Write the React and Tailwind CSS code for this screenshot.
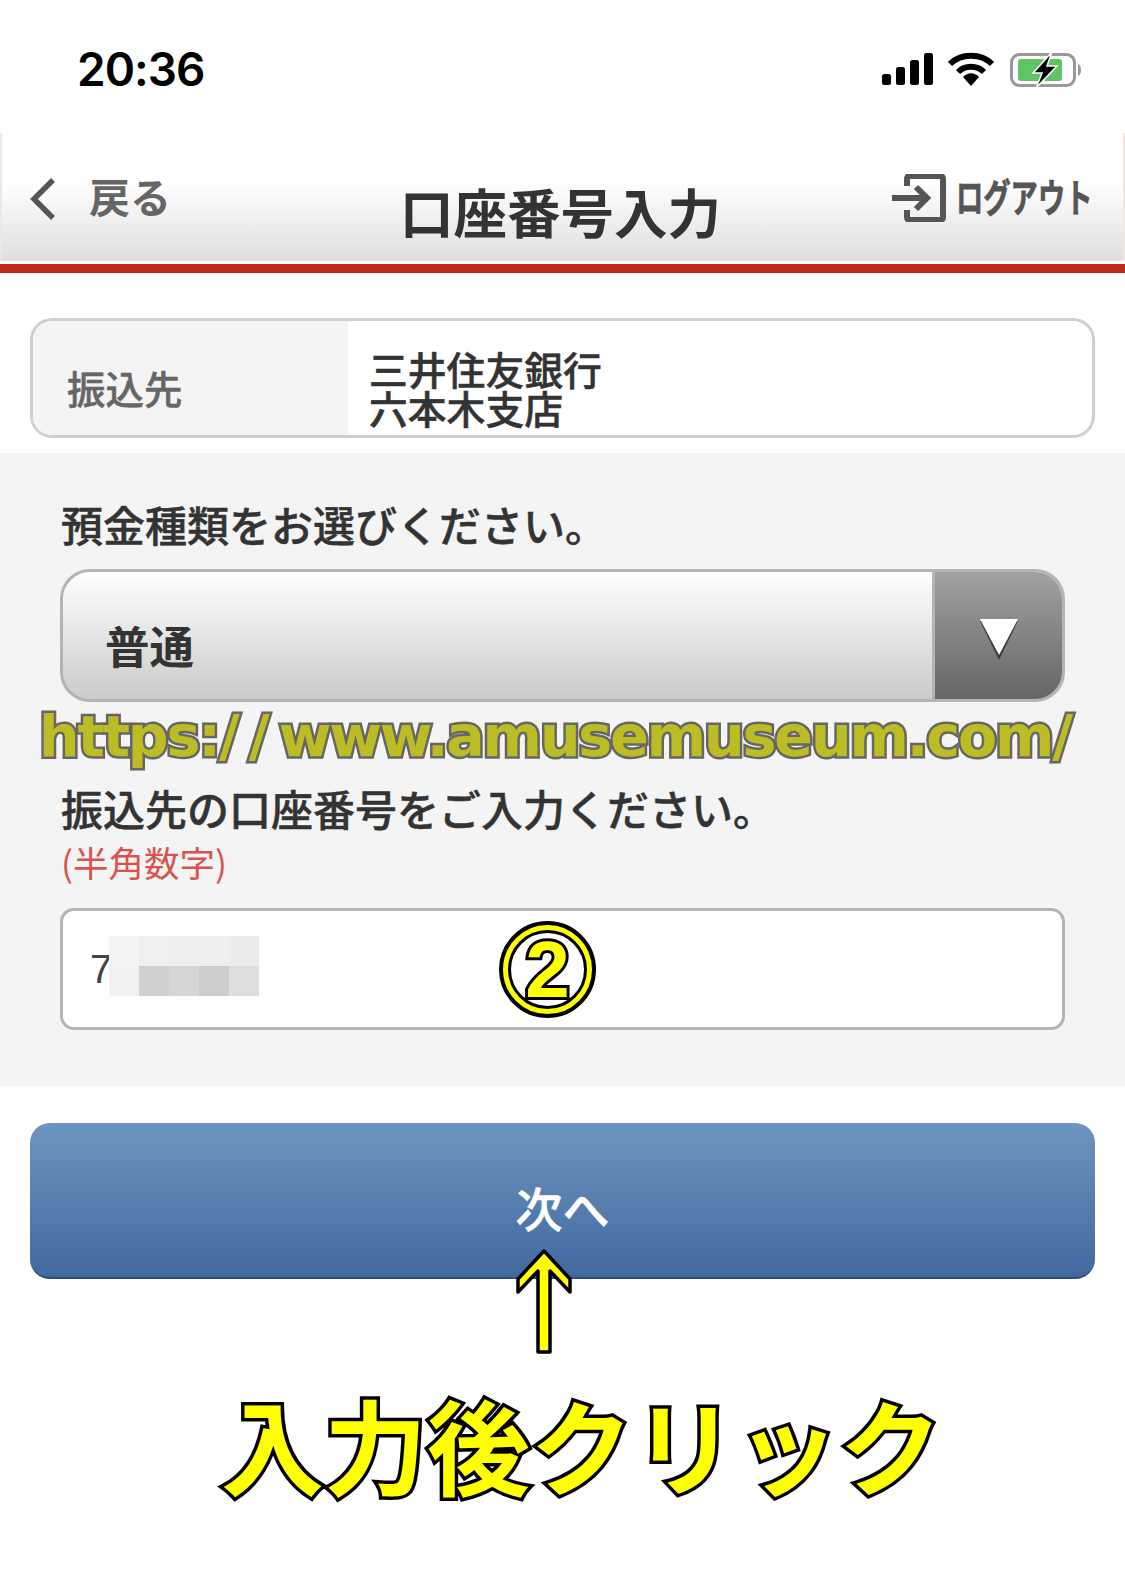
const blurCells = [
  "bg-[#f4f4f4]", "bg-[#efefef]", "bg-[#eeeeee]", "bg-[#eeeeee]", "bg-[#ececec]",
  "bg-[#f2f2f2]", "bg-[#d0d0d0]", "bg-[#d6d6d6]", "bg-[#cdcdcd]", "bg-[#dedede]",
];

function StatusBar() {
  return (
    <div className="flex h-[133px] items-start justify-between bg-white pl-[77px] pr-[43px] pt-[45px]">
      <span className="font-['Inter',sans-serif] text-[46px] font-semibold leading-[48px] tracking-[-1px] text-black">20:36</span>
      <div className="flex items-start gap-[14px] pt-[7px]">
        {/* signal */}
        <svg width="52" height="34" viewBox="0 0 52 34" fill="#000">
          <rect x="0" y="22" width="9" height="11" rx="2.5" />
          <rect x="14" y="15" width="9" height="18" rx="2.5" />
          <rect x="28" y="8" width="9" height="25" rx="2.5" />
          <rect x="42" y="1" width="9" height="32" rx="2.5" />
        </svg>
        {/* wifi */}
        <svg width="46" height="34" viewBox="0 0 46 34">
          <path d="M2 12 C13 1 33 1 44 12" fill="none" stroke="#000" strokeWidth="6" />
          <path d="M10 20 C17 13 29 13 36 20" fill="none" stroke="#000" strokeWidth="6" />
          <path d="M15 25 C20 20 26 20 31 25 L23 34 Z" fill="#000" />
        </svg>
        {/* battery */}
        <svg width="72" height="36" viewBox="0 0 72 36" className="ml-[2px]">
          <rect x="1.5" y="2.5" width="63" height="31" rx="8" fill="#fff" stroke="#999" strokeWidth="3" />
          <rect x="8" y="7" width="44" height="22" rx="3" fill="#5fc463" />
          <path d="M68 12 C72 13 72 23 68 24 Z" fill="#999" />
          <path d="M42 0 L23 21 L32 21 L26 36 L47 14 L37 14 Z" fill="#000" stroke="#fff" strokeWidth="1.5" />
        </svg>
      </div>
    </div>
  );
}

function Header() {
  return (
    <div>
      <div className="flex h-[128px] border-x-2 border-x-[#f1e6e4] bg-gradient-to-b from-white from-[38%] to-[#dfdfdf] pl-[27px] pr-[31px]">
        <div className="flex items-start pt-[44px]">
          <svg width="28" height="44" viewBox="0 0 28 44" fill="none" stroke="#555" strokeWidth="5.5">
            <path d="M24 3 L5 22 L24 41" />
          </svg>
          <span className="ml-[32px] -mt-[3px] text-[41px] font-bold leading-[42px] text-[#666]">戻る</span>
        </div>
        <h1 className="ml-[229px] pt-[50px] text-[53.5px] font-bold leading-[56px] text-[#333]">口座番号入力</h1>
        <div className="ml-auto flex items-start pt-[41px]">
          <svg width="56" height="48" viewBox="0 0 56 48" fill="none" stroke="#555" strokeWidth="6">
            <path d="M16 12 V5 Q16 2 19 2 H49 Q52 2 52 5 V43 Q52 46 49 46 H19 Q16 46 16 43 V36" />
            <path d="M1 24 H36 M25 13 L36 24 L25 35" strokeWidth="6" />
          </svg>
          <span className="ml-[9px] w-[136px] origin-left scale-x-[0.7] whitespace-nowrap text-[39px] font-bold leading-[42px] text-[#555] [-webkit-text-stroke:0.8px_currentColor]">ログアウト</span>
        </div>
      </div>
      <div className="mt-[3px] h-[9px] bg-[#bd2a1c]" />
    </div>
  );
}

function DestinationCard() {
  return (
    <div className="mx-[30px] mt-[45px] flex h-[120px] overflow-hidden rounded-[22px] border-[3px] border-[#cfcfcf] bg-white">
      <div className="w-[315px] bg-[#f4f4f4] pl-[34px] pt-[46px] text-[38.5px] font-medium leading-[40px] text-[#666] [-webkit-text-stroke:0.5px_currentColor]">振込先</div>
      <div className="pl-[21px] pt-[28px] text-[38.8px] font-medium leading-[39px] text-[#333] [-webkit-text-stroke:0.5px_currentColor]">
        <p>三井住友銀行</p>
        <p>六本木支店</p>
      </div>
    </div>
  );
}

function AccountForm() {
  return (
    <div className="mt-[15px] h-[633px] bg-[#f4f4f4] px-[60px] pt-[49px]">
      <p className="ml-[1px] text-[42px] font-medium leading-[44px] text-[#333] [-webkit-text-stroke:0.5px_currentColor]">預金種類をお選びください。</p>

      {/* select */}
      <div className="mt-[23px] flex h-[133px] w-[1005px] overflow-hidden rounded-[30px] border-[3px] border-[#b4b4b4] bg-gradient-to-b from-white to-[#cbcbcb]">
        <div className="flex-1 pl-[42px] pt-[49px] text-[44.5px] font-bold leading-[48px] text-[#333]">普通</div>
        <div className="flex w-[130px] justify-center border-l-[3px] border-l-[#b4b4b4] bg-gradient-to-b from-[#a2a2a2] to-[#666] pt-[47px]">
          <svg width="40" height="42" viewBox="0 0 40 42">
            <path d="M1 2 H39 L20 41 Z" fill="#3d3d3d" />
            <path d="M1 0 H39 L20 36 Z" fill="#fff" />
          </svg>
        </div>
      </div>

      {/* watermark */}
      <p className="-ml-[21px] mt-[4px] whitespace-nowrap font-['DejaVu_Sans',sans-serif] text-[57px] font-bold leading-[60px] tracking-[-2.1px] text-[#bcbc25] [-webkit-text-stroke:5px_#666] [paint-order:stroke_fill]">
        https:<span className="tracking-[9px]">//</span>www.amusemuseum.com/
      </p>

      <p className="ml-[1px] mt-[20px] text-[42px] font-medium leading-[44px] text-[#333] [-webkit-text-stroke:0.5px_currentColor]">振込先の口座番号をご入力ください。</p>
      <p className="ml-[1px] mt-[13px] text-[35.5px] leading-[38px] text-[#d9534f]">(半角数字)</p>

      {/* number input */}
      <div className="relative mt-[27px] flex h-[122px] w-[1005px] items-center rounded-[14px] border-[3px] border-[#b4b4b4] bg-white pl-[27px]">
        <span className="font-['Liberation_Sans',sans-serif] text-[40px] leading-none text-[#444]">7</span>
        <div className="-ml-[3px] mb-[6px] grid w-[150px] grid-cols-5">
          {blurCells.map((c, i) => (
            <div key={i} className={`h-[30px] ${c}`} />
          ))}
        </div>
        <div className="absolute left-[436px] top-[10px] flex h-[97px] w-[97px] items-center justify-center rounded-full border-[4px] border-black bg-[#ffff00]">
          <div className="flex h-[79px] w-[79px] items-center justify-center rounded-full border-[3px] border-black bg-white">
            <span className="font-['Liberation_Sans',sans-serif] text-[80px] font-bold leading-none text-[#ffff00] [-webkit-text-stroke:6px_#000] [paint-order:stroke_fill]">2</span>
          </div>
        </div>
      </div>
    </div>
  );
}

function NextButton() {
  return (
    <div className="relative mx-[30px] mt-[37px] flex h-[156px] items-start justify-center rounded-[20px] border-b-2 border-b-[#2f4d78] bg-gradient-to-b from-[#6f96bf] to-[#41699f] pt-[60px]">
      <span className="text-[47px] font-medium leading-[48px] text-white [-webkit-text-stroke:0.5px_currentColor]">次へ</span>
      {/* arrow drawn on top of the button */}
      <svg className="absolute left-[486px] top-[126px]" width="56" height="105" viewBox="0 0 56 105" fill="#ffff00" stroke="#000" strokeWidth="3.5" strokeLinejoin="round">
        <path d="M28 2 L54 30 V43 L34 22 V103 H22 V22 L2 43 V30 Z" />
      </svg>
    </div>
  );
}

export default function App() {
  return (
    <div className="h-[1579px] w-[1125px] overflow-hidden bg-white font-['Noto_Sans_CJK_JP',sans-serif]">
      <StatusBar />
      <Header />
      <DestinationCard />
      <AccountForm />
      <NextButton />
      <p className="ml-[221px] mt-[109px] whitespace-nowrap text-[103px] font-bold leading-[112px] text-[#ffff00] [-webkit-text-stroke:7px_#000] [paint-order:stroke_fill]">
        入力後クリック
      </p>
    </div>
  );
}
